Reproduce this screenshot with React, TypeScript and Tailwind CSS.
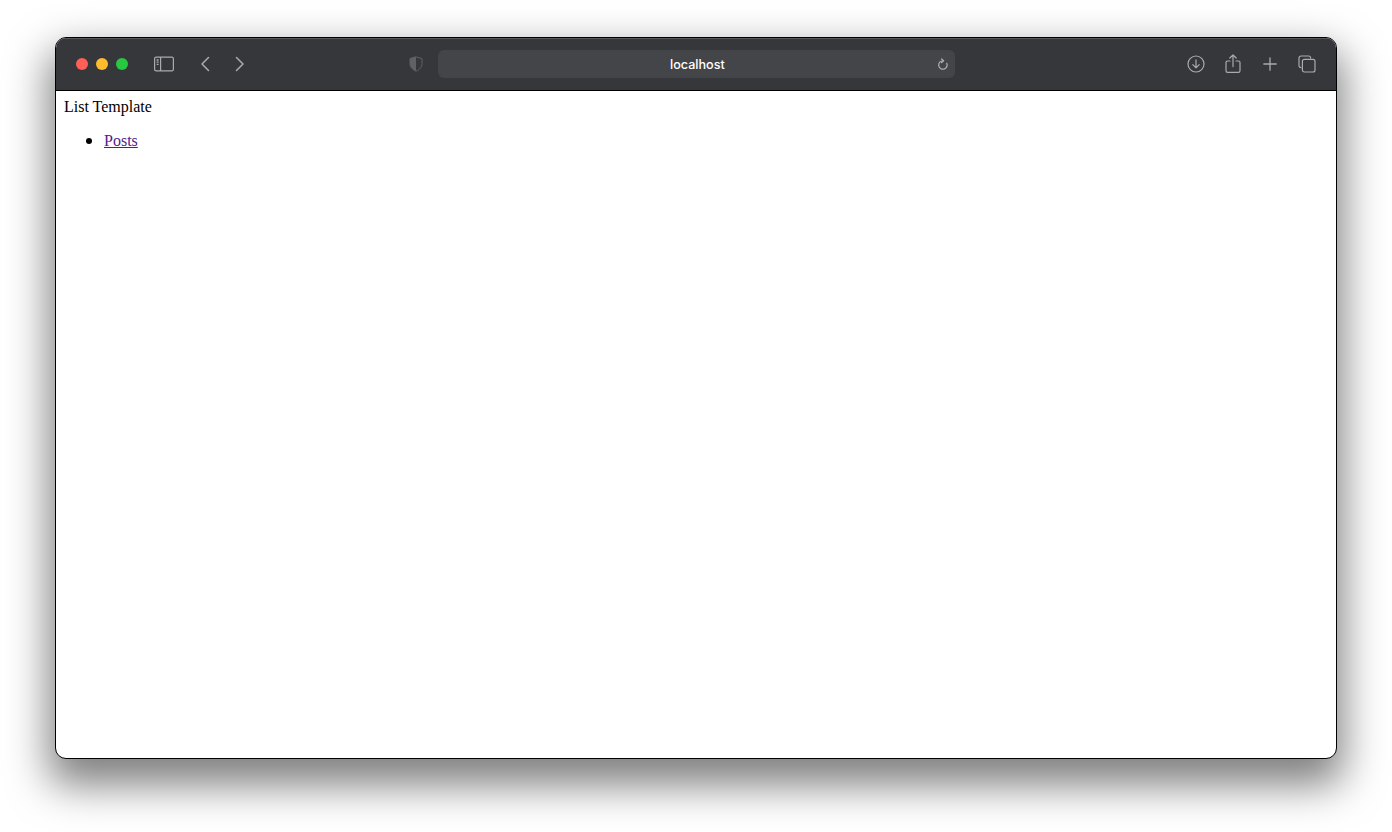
function SidebarIcon() {
  return (
    <svg width="20" height="16" viewBox="0 0 20 16" fill="none" stroke="#a9abae" strokeWidth="1.2">
      <rect x="0.6" y="1.1" width="18.8" height="13.8" rx="1.6" />
      <path d="M6.6 1.1v13.8" />
      <path d="M2.6 4h2M2.6 6.2h2M2.6 8.4h2" strokeWidth="1.3" />
    </svg>
  );
}

function Chevron({ back }: { back?: boolean }) {
  return (
    <svg width="10" height="16" viewBox="0 0 10 16" fill="none" stroke="#a9abae" strokeWidth="1.5" strokeLinecap="round" strokeLinejoin="round">
      <path d={back ? 'M8.5 1.5 2 8l6.5 6.5' : 'M1.5 1.5 8 8l-6.5 6.5'} />
    </svg>
  );
}

function ShieldIcon() {
  return (
    <svg width="14" height="16" viewBox="0 0 14 16" fill="none">
      <path d="M7 .8 13 2.6v5c0 3.6-2.6 6-6 7.6-3.4-1.6-6-4-6-7.6v-5z" stroke="#5f6165" strokeWidth="1" />
      <path d="M7 .8 1 2.6v5c0 3.6 2.6 6 6 7.6z" fill="#5f6165" />
    </svg>
  );
}

function ReloadIcon() {
  return (
    <svg width="12" height="13" viewBox="0 0 12 13" fill="none" stroke="#a9abae" strokeWidth="1.3" strokeLinecap="round">
      <path d="M7 2.8a4.2 4.2 0 1 0 3.8 2.6" />
      <path d="M5.6 1 7.6 2.8 5.6 4.6" strokeLinejoin="round" />
    </svg>
  );
}

function DownloadIcon() {
  return (
    <svg width="18" height="18" viewBox="0 0 18 18" fill="none" stroke="#a9abae" strokeWidth="1.2" strokeLinecap="round" strokeLinejoin="round">
      <circle cx="9" cy="9" r="8" />
      <path d="M9 4.8v8M5.8 9.6 9 12.8l3.2-3.2" />
    </svg>
  );
}

function ShareIcon() {
  return (
    <svg width="16" height="20" viewBox="0 0 16 20" fill="none" stroke="#a9abae" strokeWidth="1.2" strokeLinecap="round" strokeLinejoin="round">
      <path d="M5 7H2.6A1.6 1.6 0 0 0 1 8.6v8.2a1.6 1.6 0 0 0 1.6 1.6h10.8a1.6 1.6 0 0 0 1.6-1.6V8.6A1.6 1.6 0 0 0 13.4 7H11" />
      <path d="M8 12.6V1M4.8 4 8 1l3.2 3" />
    </svg>
  );
}

function PlusIcon() {
  return (
    <svg width="14" height="14" viewBox="0 0 14 14" fill="none" stroke="#a9abae" strokeWidth="1.3" strokeLinecap="round">
      <path d="M7 .8v12.4M.8 7h12.4" />
    </svg>
  );
}

function TabsIcon() {
  return (
    <svg width="18" height="18" viewBox="0 0 18 18" fill="none" stroke="#a9abae" strokeWidth="1.2">
      <path d="M3.4 12.6H3a2 2 0 0 1-2-2V3a2 2 0 0 1 2-2h7.6a2 2 0 0 1 2 2v.6" />
      <rect x="4.4" y="4.4" width="12.6" height="12.6" rx="2" />
    </svg>
  );
}

export default function App() {
  return (
    <div className="h-[832px] overflow-hidden bg-white pl-[55px] pt-[37px]">
      <div className="flex h-[722px] w-[1282px] flex-col overflow-hidden rounded-[11px] border border-black bg-white shadow-[0_20px_42px_6px_rgba(0,0,0,0.5)]">
        <header className="flex h-[53px] shrink-0 items-center border-b border-black bg-[#36373b] shadow-[inset_0_1px_0_#55565a]">
          <div className="ml-5 flex gap-2">
            <span className="size-3 rounded-full bg-[#ff5f57]" />
            <span className="size-3 rounded-full bg-[#febc2e]" />
            <span className="size-3 rounded-full bg-[#28c840]" />
          </div>
          <div className="ml-[26px] flex"><SidebarIcon /></div>
          <div className="ml-[26px] flex"><Chevron back /></div>
          <div className="ml-[25px] flex"><Chevron /></div>
          <div className="ml-[164px] flex"><ShieldIcon /></div>
          <div className="ml-[15px] flex h-7 w-[517px] items-center rounded-md bg-[#434549] pl-[232px] pr-[7px]">
            <span className="w-[54px] whitespace-nowrap pt-[3px] text-center font-['Inter',sans-serif] text-[12.6px] font-medium text-white">localhost</span>
            <span className="ml-auto flex pt-px"><ReloadIcon /></span>
          </div>
          <div className="ml-[232px] flex"><DownloadIcon /></div>
          <div className="ml-[20px] flex"><ShareIcon /></div>
          <div className="ml-[22px] flex"><PlusIcon /></div>
          <div className="ml-[21px] flex"><TabsIcon /></div>
        </header>
        <main className="flex-1 px-2 pt-[7px] font-['Liberation_Serif',serif] text-base leading-[18px] text-black">
          <div>List Template</div>
          <ul className="mt-[15px] list-disc pl-10 marker:text-[19px]">
            <li>
              <a href="#posts" className="text-[#551a8b] underline">Posts</a>
            </li>
          </ul>
        </main>
      </div>
    </div>
  );
}
